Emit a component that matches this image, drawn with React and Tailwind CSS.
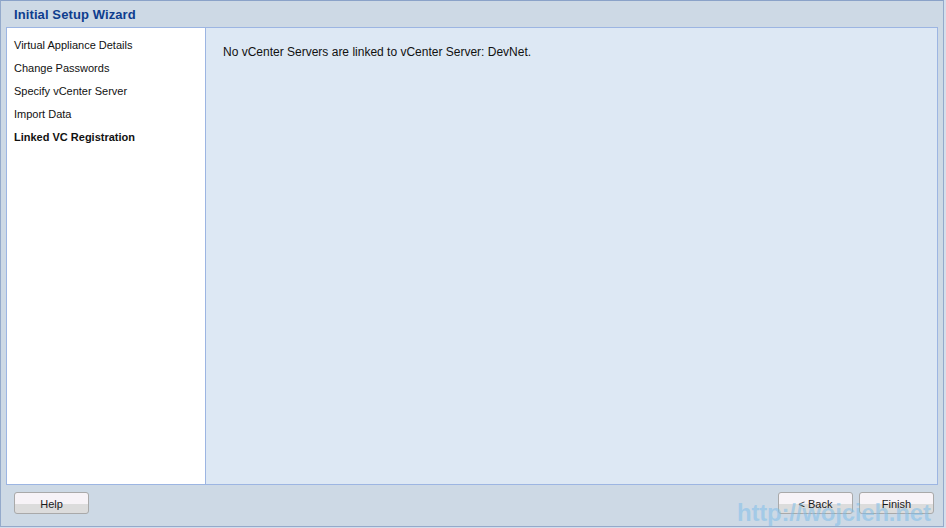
export default function App() {
  const steps = [
    "Virtual Appliance Details",
    "Change Passwords",
    "Specify vCenter Server",
    "Import Data",
  ];
  const btn =
    "h-[22px] w-[75px] rounded-[3px] border border-[#a9a9a9] bg-[linear-gradient(to_bottom,#f7f3f7_0%,#f7f3f7_55%,#dcdcdc_55%,#dcdcdc_100%)] text-[11px] leading-[22px] pt-[1px] text-[#1a1a1a] flex items-center justify-center";
  return (
    <div
      className="relative w-[946px] h-[528px] overflow-hidden bg-[#d5deeb]"
      style={{ fontFamily: '"Liberation Sans", Arial, sans-serif' }}
    >
      <div className="w-[944px] h-[527px] border border-[#94aacb] border-t-[#8aa2c8] bg-[#cdd9e5] flex flex-col">
        <div className="h-[26px] pl-[13px] pt-[2px] flex items-center">
          <span className="text-[13px] font-bold text-[#0e3d8e] tracking-[0.1px]">
            Initial Setup Wizard
          </span>
        </div>
        <div className="h-[458px] mx-[5px] border border-[#9cb5e2] flex">
          <div className="w-[199px] bg-white border-r border-[#9cb5e2] pl-[7px] pt-[6px]">
            {steps.map((s) => (
              <div key={s} className="text-[11px] leading-[23px] text-[#111]">
                {s}
              </div>
            ))}
            <div className="text-[11px] leading-[23px] font-bold text-[#111]">
              Linked VC Registration
            </div>
          </div>
          <div className="flex-1 bg-[#dde8f4] pl-[17px] pt-[16px]">
            <div className="text-[12px] leading-[16px] text-[#111]">
              No vCenter Servers are linked to vCenter Server: DevNet.
            </div>
          </div>
        </div>
        <div className="flex-1 flex items-start justify-between pt-[7px] pl-[13px] pr-[9px]">
          <button className={btn}>Help</button>
          <div className="flex gap-[6px]">
            <button className={btn}>&lt; Back</button>
            <button className={btn}>Finish</button>
          </div>
        </div>
      </div>
      <div className="absolute left-[737px] top-[498px] text-[24px] leading-[30px] font-bold text-[#7fbde9]/55 tracking-[-0.2px] whitespace-nowrap">
        http://wojcieh.net
      </div>
    </div>
  );
}
